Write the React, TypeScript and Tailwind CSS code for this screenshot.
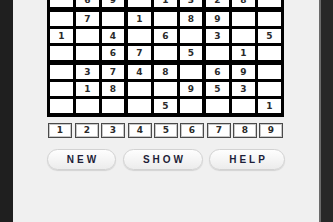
import React from "react";

const rows: (number | null)[][] = [
  [null, null, 5, 9, null, null, null, 7, null],
  [null, 2, null, null, 7, null, 1, null, 4],
  [null, 6, 9, null, 1, 3, 2, 8, null],
  [null, 7, null, 1, null, 8, 9, null, null],
  [1, null, 4, null, 6, null, 3, null, 5],
  [null, null, 6, 7, null, 5, null, 1, null],
  [null, 3, 7, 4, 8, null, 6, 9, null],
  [null, 1, 8, null, null, 9, 5, 3, null],
  [null, null, null, null, 5, null, null, null, 1],
];

const colW = ["w-[23px]", "w-[23px]", "w-[22px]", "w-[23px]", "w-[23px]", "w-[22px]", "w-[23px]", "w-[23px]", "w-[23px]"];
const colGap = ["", "ml-[3px]", "ml-[3px]", "ml-[4px]", "ml-[3px]", "ml-[3px]", "ml-[4px]", "ml-[3px]", "ml-[3px]"];
const rowGap = ["", "mt-[3px]", "mt-[3px]", "mt-[5px]", "mt-[3px]", "mt-[3px]", "mt-[5px]", "mt-[3px]", "mt-[3px]"];
const tileGap = ["", "ml-[3px]", "ml-[2px]", "ml-[3px]", "ml-[2px]", "ml-[2px]", "ml-[3px]", "ml-[2px]", "ml-[2px]"];

const digitFont = { fontFamily: '"DejaVu Sans", "Liberation Sans", sans-serif' };
const btnFont = { fontFamily: '"Liberation Sans", Arial, sans-serif' };

export default function App() {
  return (
    <div className="w-[333px] h-[222px] overflow-hidden flex bg-[#f0f0f0]">
      <div className="w-[13px] h-full bg-[#1f1f1f] shrink-0" />
      <div className="w-[306px] h-full bg-[#f0f0f0] shrink-0 flex flex-col items-start pl-[34px]">
        <div className="-mt-[45px] bg-black pt-[4px] pb-[4px] pl-[3px] pr-[3px] flex flex-col">
          {rows.map((r, ri) => (
            <div key={ri} className={`flex ${rowGap[ri]}`}>
              {r.map((v, ci) => (
                <div
                  key={ci}
                  className={`${colW[ci]} ${colGap[ci]} h-[14px] bg-white flex items-center justify-center text-[9px] font-bold text-[#2a2a2a] leading-none`}
                  style={digitFont}
                >
                  {v ?? ""}
                </div>
              ))}
            </div>
          ))}
        </div>
        <div className="mt-[6px] ml-[1px] flex">
          {[1, 2, 3, 4, 5, 6, 7, 8, 9].map((n, i) => (
            <div
              key={n}
              className={`${tileGap[i]} w-[24px] h-[15px] bg-white border border-[#4a4a4a] shadow-[inset_0_0_0_1px_#c8c8c8] flex items-center justify-center text-[9px] font-bold text-[#2a2a2a] leading-none`}
              style={digitFont}
            >
              {n}
            </div>
          ))}
        </div>
        <div className="mt-[11px] flex">
          {[
            { t: "NEW", w: "w-[69px]", m: "" },
            { t: "SHOW", w: "w-[80px]", m: "ml-[7px]" },
            { t: "HELP", w: "w-[76px]", m: "ml-[6px]" },
          ].map((b) => (
            <div
              key={b.t}
              className={`${b.w} ${b.m} h-[21px] rounded-[11px] border border-[#d2d2d2] bg-gradient-to-b from-[#fefefe] to-[#ececec] shadow-[0_1px_1px_rgba(0,0,0,0.12)] flex items-center justify-center text-[10px] font-bold text-[#1e1e38] tracking-[3px] pl-[3px] leading-none`}
              style={btnFont}
            >
              {b.t}
            </div>
          ))}
        </div>
      </div>
      <div className="w-[14px] h-full shrink-0 bg-[#272727] border-l-2 border-[#6a6a6a]" />
    </div>
  );
}
